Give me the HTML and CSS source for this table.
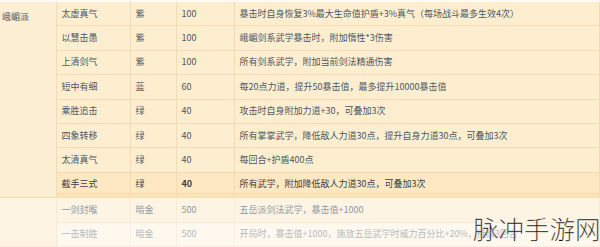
FILE: index.html
```html
<!DOCTYPE html>
<html lang="zh">
<head>
<meta charset="utf-8">
<link rel="stylesheet" href="styles.css">
</head>
<body>
<div class="page">
  <table class="skills">
    <colgroup>
      <col class="c-sect"><col class="c-name"><col class="c-grade"><col class="c-val"><col class="c-desc">
    </colgroup>
    <tbody>
      <tr>
        <td class="sect" rowspan="8">峨嵋派</td>
        <td>太虚真气</td><td>紫</td><td>100</td>
        <td>暴击时自身恢复3%最大生命值护盾+3%真气（每场战斗最多生效4次）</td>
      </tr>
      <tr><td>以慧击愚</td><td>紫</td><td>100</td><td>峨嵋剑系武学暴击时，附加惰性*3伤害</td></tr>
      <tr><td>上清剑气</td><td>紫</td><td>100</td><td>所有剑系武学，附加当前剑法精通伤害</td></tr>
      <tr><td>短中有细</td><td>蓝</td><td>60</td><td>每20点力道，提升50暴击值，最多提升10000暴击值</td></tr>
      <tr><td>乘胜追击</td><td>绿</td><td>40</td><td>攻击时自身附加力道+30，可叠加3次</td></tr>
      <tr><td>四象转移</td><td>绿</td><td>40</td><td>所有掌掌武学，降低敌人力道30点，提升自身力道30点，可叠加3次</td></tr>
      <tr><td>太清真气</td><td>绿</td><td>40</td><td>每回合+护盾400点</td></tr>
      <tr class="hot"><td>截手三式</td><td>绿</td><td class="strong">40</td><td>所有武学，附加降低敌人力道30点，可叠加3次</td></tr>
      <tr class="fade1">
        <td class="sect-empty" rowspan="2"></td>
        <td>一剑封喉</td><td>暗金</td><td>500</td><td>五岳派剑法武学，暴击值+1000</td>
      </tr>
      <tr class="fade2"><td>一击制胜</td><td>暗金</td><td>500</td><td>开局时，暴击值+1000，施放五岳武学时威力百分比+20%，持续3回合</td></tr>
    </tbody>
  </table>
  <div class="watermark">脉冲手游网</div>
</div>
</body>
</html>
```
FILE: styles.css
```css
html, body {
  margin: 0;
  padding: 0;
  background: #fefaf2;
}
.page {
  position: relative;
  width: 600px;
  height: 247px;
  overflow: hidden;
  background: #fefaf2;
}
.skills {
  width: 600px;
  border-collapse: collapse;
  table-layout: fixed;
  font-family: "Noto Sans CJK SC", "Noto Sans", sans-serif;
  font-size: 9px;
  color: #4c5865;
  margin-top: 2px;
}
.c-sect { width: 56px; }
.c-name { width: 74px; }
.c-grade { width: 46px; }
.c-val { width: 58px; }
.skills td {
  height: 23.4px;
  padding: 0 0 0 5px;
  border: 1px solid #f3dcb5;
  background: #fdeecf;
  white-space: nowrap;
  overflow: hidden;
  line-height: 12px;
  vertical-align: middle;
}
.skills tr > td:first-child { border-left: none; }
.skills tr:first-child td { border-top: none; }
.skills td.sect {
  vertical-align: top;
  padding: 9px 0 0 2px;
  background: #fdefd3;
}
.skills tr.hot td {
  background: linear-gradient(#fde8c2 0, #fde8c2 20px, #fbe2b6 20px);
  color: #39424b;
  border-bottom: 2px solid #fae0b3;
}
.skills tr.hot td.strong { font-weight: bold; }
.skills tr.fade1 td {
  background: #fdf4e4;
  color: #8f9aa4;
  border-color: #f8ead4;
}
.skills tr.fade2 td {
  background: #fef8ee;
  color: #b4bbc2;
  border-color: #f9efe0;
}
.skills td.sect-empty {
  background: #fef9f0;
  border-color: #fdf4e6;
}
.watermark {
  position: absolute;
  left: 473px;
  top: 210px;
  font-family: "Noto Sans CJK SC", sans-serif;
  font-weight: 300;
  font-size: 25.5px;
  line-height: 36px;
  color: #000;
  white-space: nowrap;
  -webkit-text-stroke: 0.3px #fef8ee;
}
```
